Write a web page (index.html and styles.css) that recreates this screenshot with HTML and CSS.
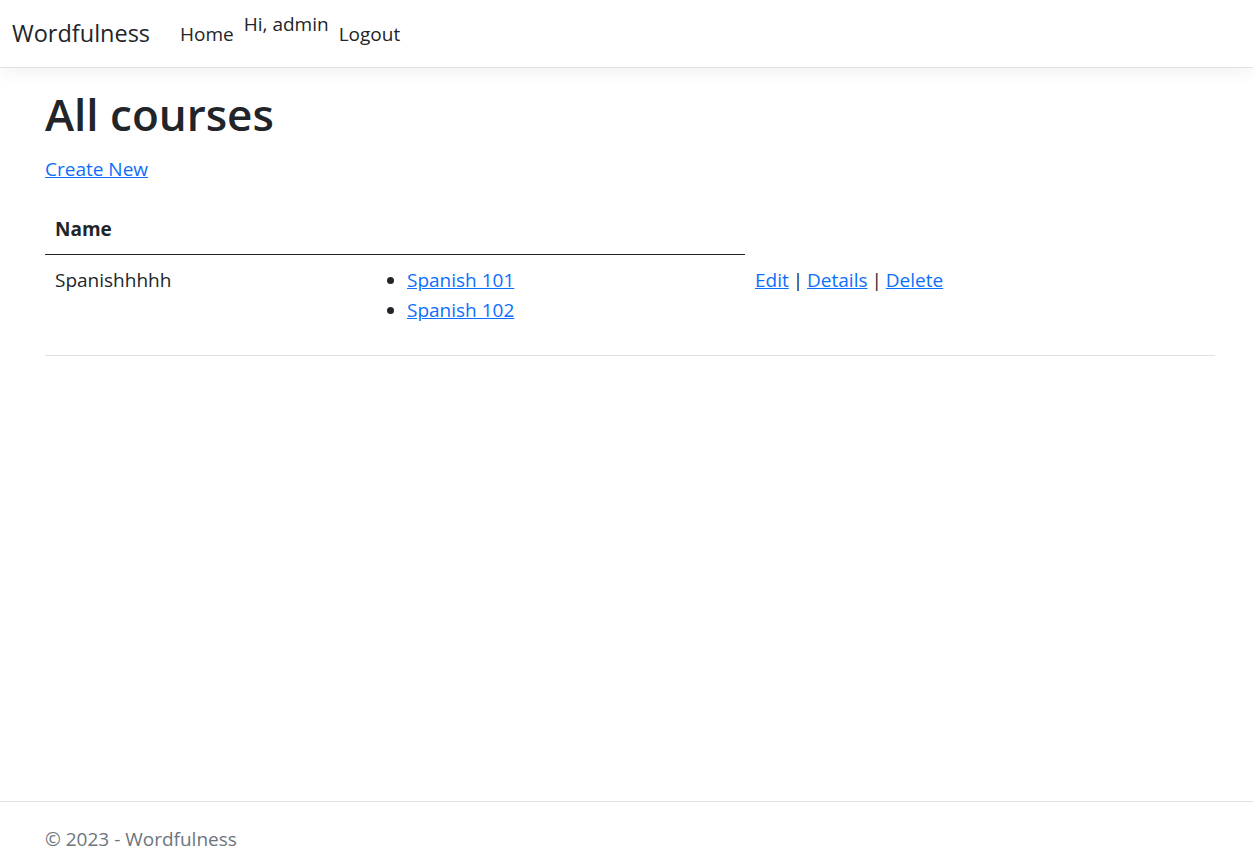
FILE: index.html
```html
<!DOCTYPE html>
<html lang="en">
<head>
<meta charset="utf-8">
<title>All courses - Wordfulness</title>
<link rel="stylesheet" href="styles.css">
</head>
<body>
<div class="page">
  <header class="topbar">
    <nav class="navbar">
      <a class="brand" href="#">Wordfulness</a>
      <ul class="nav">
        <li><a class="nav-link" href="#">Home</a></li>
        <li class="greeting">Hi, admin</li>
        <li><button class="nav-link logout" type="button">Logout</button></li>
      </ul>
    </nav>
  </header>

  <main class="container">
    <h1 class="title">All courses</h1>
    <p class="actions"><a href="#">Create New</a></p>
    <table class="table">
      <thead>
        <tr>
          <th class="col-name">Name</th>
          <th class="col-courses"></th>
          <th class="col-actions blank"></th>
        </tr>
      </thead>
      <tbody>
        <tr>
          <td>Spanishhhhh</td>
          <td>
            <ul class="course-list">
              <li><a href="#">Spanish 101</a></li>
              <li><a href="#">Spanish 102</a></li>
            </ul>
          </td>
          <td class="row-actions"><a href="#">Edit</a> | <a href="#">Details</a> | <a href="#">Delete</a></td>
        </tr>
      </tbody>
    </table>
  </main>

  <footer class="footer">
    <div class="container footer-inner">&copy; 2023 - Wordfulness</div>
  </footer>
</div>
</body>
</html>
```

FILE: styles.css
```css
* { box-sizing: border-box; }

html, body {
  margin: 0;
  padding: 0;
}

body {
  font-family: "Open Sans", "Noto Sans", sans-serif;
  font-size: 19px;
  line-height: 30px;
  color: #212529;
  background: #fff;
}

a { color: #0d6efd; text-decoration: underline; }

.page {
  display: flex;
  flex-direction: column;
  min-height: 877px;
}

.topbar {
  height: 68px;
  border-bottom: 1px solid #dee2e6;
  box-shadow: 0 5px 15px rgba(0, 0, 0, 0.05);
  background: #fff;
}

.navbar {
  display: flex;
  align-items: center;
  height: 67px;
  padding: 0 12px;
}

.brand {
  font-size: 23.5px;
  line-height: 37px;
  color: #212529;
  text-decoration: none;
  margin-right: 20px;
}

.nav {
  display: flex;
  align-items: flex-start;
  list-style: none;
  margin: 0;
  padding: 0;
}

.nav-link {
  display: block;
  padding: 10px 10px;
  font: inherit;
  line-height: 30px;
  color: #212529;
  text-decoration: none;
  background: none;
  border: 0;
  cursor: pointer;
}

.greeting {
  line-height: 30px;
}

.container {
  width: 1170px;
  margin-left: 45px;
}

main.container {
  flex: 1;
  padding-top: 16px;
}

.title {
  font-size: 44px;
  font-weight: 600;
  line-height: 60px;
  margin: 0 0 10px;
}

.actions {
  margin: 0 0 20px;
}

.table {
  width: 1170px;
  border-collapse: collapse;
  table-layout: fixed;
}

.table th,
.table td {
  padding: 10px;
  text-align: left;
  vertical-align: top;
}

.table th {
  font-weight: 700;
  border-bottom: 1px solid #212529;
}

.table th.blank {
  border-bottom: 0;
}

.table td {
  border-bottom: 1px solid #dee2e6;
}

.row-actions {
  word-spacing: -1px;
}

.col-name { width: 312px; }
.col-courses { width: 388px; }
.col-actions { width: 470px; }

.course-list {
  margin: 0 0 20px;
  padding-left: 40px;
}

.footer {
  border-top: 1px solid #dee2e6;
  line-height: 75px;
  white-space: nowrap;
  color: #6c757d;
}
```
